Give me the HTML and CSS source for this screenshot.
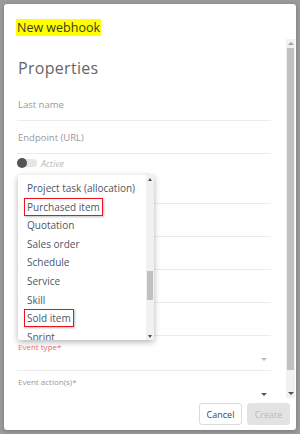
FILE: index.html
```html
<!DOCTYPE html>
<html>
<head>
<meta charset="utf-8">
<link rel="stylesheet" href="styles.css">
</head>
<body>
<div class="modal">
  <div class="modal-header"><span class="title">New webhook</span></div>
  <div class="modal-body">
    <div class="content">
      <h2 class="section">Properties</h2>
      <div class="field"><span class="placeholder">Last name</span></div>
      <div class="field"><span class="placeholder">Endpoint (URL)</span></div>
      <div class="toggle-row">
        <span class="toggle"><span class="knob"></span></span>
        <span class="toggle-label">Active</span>
      </div>
      <div class="field"></div>
      <div class="field"></div>
      <div class="field"></div>
      <div class="field"></div>
      <div class="field"></div>
      <div class="field select">
        <span class="float-label error">Event type*</span>
        <span class="caret light"></span>
      </div>
      <div class="field select">
        <span class="float-label">Event action(s)*</span>
        <span class="caret dark"></span>
      </div>
    </div>
    <div class="vscroll">
      <span class="sb-btn"><span class="arrow up"></span></span>
      <span class="sb-thumb"></span>
      <span class="sb-track"></span>
      <span class="sb-btn"><span class="arrow down"></span></span>
    </div>
    <div class="dropdown">
      <ul class="options">
        <li>Project task (allocation)</li>
        <li><span class="mark">Purchased item</span></li>
        <li>Quotation</li>
        <li>Sales order</li>
        <li>Schedule</li>
        <li>Service</li>
        <li>Skill</li>
        <li><span class="mark">Sold item</span></li>
        <li>Sprint</li>
      </ul>
      <div class="dscroll">
        <span class="dsb-btn"><span class="arrow up small"></span></span>
        <span class="dsb-track top"></span>
        <span class="dsb-thumb"></span>
        <span class="dsb-track bottom"></span>
        <span class="dsb-btn"><span class="arrow down small"></span></span>
      </div>
    </div>
  </div>
  <div class="modal-footer">
    <button class="btn cancel">Cancel</button>
    <button class="btn create">Create</button>
  </div>
</div>
</body>
</html>
```
FILE: styles.css
```css
* { box-sizing: border-box; }
html, body { margin: 0; padding: 0; }
body {
  width: 300px;
  height: 434px;
  background: #9b9b9b;
  font-family: "Open Sans", "Noto Sans", sans-serif;
  overflow: hidden;
  padding: 4px;
}
.modal {
  width: 292px;
  height: 426px;
  background: #fff;
  border-radius: 3px;
  box-shadow: 0 1px 4px rgba(0,0,0,0.25);
  display: flex;
  flex-direction: column;
  position: relative;
}
.modal-header {
  height: 35px;
  padding: 11px 0 0 12px;
}
.title {
  display: inline-block;
  background: #ffff00;
  font-size: 12.5px;
  line-height: 17px;
  color: #3a3a1a;
  padding: 0 1px;
}
.modal-body {
  flex: 1;
  display: flex;
  position: relative;
  overflow: hidden;
}
.content {
  flex: 1;
  padding: 0 15px 0 13px;
  overflow: hidden;
}
.section {
  margin: 19px 0 0 1px;
  font-size: 16px;
  line-height: 20px;
  font-weight: 400;
  color: #666;
  letter-spacing: 0.3px;
  height: 30px;
}
.field {
  height: 33px;
  border-bottom: 1px solid #ebebeb;
  display: flex;
  align-items: center;
  position: relative;
}
.placeholder {
  font-size: 9.5px;
  color: #999;
  padding-left: 1px;
}
.toggle-row {
  height: 17px;
  display: flex;
  align-items: center;
  padding-top: 1px;
}
.toggle {
  width: 20px;
  height: 8px;
  border-radius: 4px;
  background: #e6e6e6;
  position: relative;
  display: inline-block;
}
.knob {
  position: absolute;
  left: 0;
  top: -1px;
  width: 10px;
  height: 10px;
  border-radius: 50%;
  background: #555;
}
.toggle-label {
  font-size: 9px;
  font-style: italic;
  color: #bbb;
  margin-left: 4px;
}
.field.select { height: 35px; align-items: flex-start; }
.float-label {
  font-size: 8px;
  color: #999;
  margin-top: 5px;
  padding-left: 1px;
}
.float-label.error { color: #ef6a79; }
.caret {
  position: absolute;
  right: 4px;
  bottom: 9px;
  width: 0;
  height: 0;
  border-left: 3px solid transparent;
  border-right: 3px solid transparent;
  border-top: 3px solid #bbb;
}
.caret.dark { border-top-color: #555; bottom: 9px; }
.vscroll {
  width: 9px;
  margin-right: 1px;
  display: flex;
  flex-direction: column;
  background: #f1f1f1;
}
.sb-btn {
  height: 9px;
  display: flex;
  align-items: center;
  justify-content: center;
  background: #f1f1f1;
}
.sb-thumb {
  height: 322px;
  background: #c1c1c1;
  margin: 0 1px;
}
.sb-track { flex: 1; background: #f1f1f1; }
.arrow {
  width: 0; height: 0;
  border-left: 3px solid transparent;
  border-right: 3px solid transparent;
}
.arrow.up { border-bottom: 3px solid #a3a3a3; }
.arrow.down { border-top: 3px solid #505050; }
.arrow.small { border-left-width: 2px; border-right-width: 2px; }
.dropdown {
  position: absolute;
  left: 14px;
  top: 136px;
  width: 136px;
  height: 165px;
  background: #fff;
  box-shadow: 0 2px 6px rgba(0,0,0,0.3);
  display: flex;
  border-radius: 2px;
}
.options {
  list-style: none;
  margin: 0;
  padding: 4px 0 0 0;
  flex: 1;
  overflow: hidden;
}
.options li {
  height: 18.6px;
  line-height: 18.6px;
  font-size: 10px;
  color: #4d5566;
  padding-left: 9px;
  white-space: nowrap;
}
.mark {
  display: inline-block;
  line-height: 16px;
  border: 1px solid #e8141b;
  margin-left: -3px;
  padding: 0 2px;
  box-shadow: 1px 1px 2px rgba(0,0,0,0.25);
}
.dscroll {
  width: 8px;
  display: flex;
  flex-direction: column;
  background: #f1f1f1;
}
.dsb-btn {
  height: 8px;
  display: flex;
  align-items: center;
  justify-content: center;
}
.dsb-btn .arrow.up { border-bottom-color: #505050; }
.dsb-track.top { height: 88px; }
.dsb-thumb { height: 29px; background: #c1c1c1; margin: 0 1px; }
.dsb-track.bottom { flex: 1; }
.modal-footer {
  height: 32px;
  display: flex;
  justify-content: flex-end;
  align-items: flex-start;
  gap: 5px;
  padding: 5px 6px 0 0;
}
.btn {
  height: 22px;
  width: 43px;
  font-family: "Open Sans", "Noto Sans", sans-serif;
  font-size: 9px;
  border-radius: 3px;
  padding: 0;
}
.cancel {
  background: #fff;
  border: 1px solid #dcdcdc;
  color: #444;
}
.create {
  background: #e3e3e3;
  border: 1px solid #e3e3e3;
  color: #b9b9b9;
}
```
